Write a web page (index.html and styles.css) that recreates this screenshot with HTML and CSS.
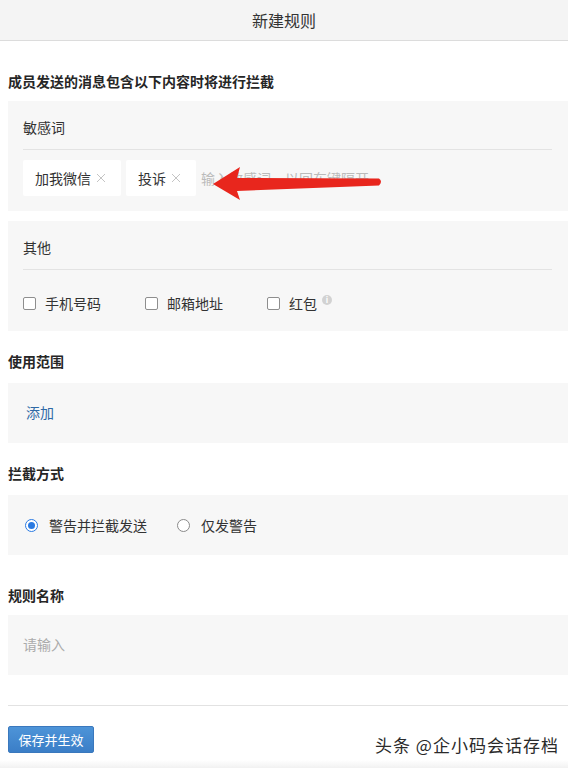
FILE: index.html
```html
<!DOCTYPE html>
<html lang="zh">
<head>
<meta charset="utf-8">
<title>新建规则</title>
<link rel="stylesheet" href="styles.css">
</head>
<body>
<div class="page">
  <header class="topbar">新建规则</header>
  <main class="content">
    <h2 class="sec-title first">成员发送的消息包含以下内容时将进行拦截</h2>
    <section class="panel">
      <div class="panel-label">敏感词</div>
      <div class="tags">
        <span class="tag">加我微信<svg class="x" viewBox="0 0 10 10" width="10" height="10"><path d="M1 1L9 9M9 1L1 9" stroke="#c4c4c4" stroke-width="1"/></svg></span>
        <span class="tag">投诉<svg class="x" viewBox="0 0 10 10" width="10" height="10"><path d="M1 1L9 9M9 1L1 9" stroke="#c4c4c4" stroke-width="1"/></svg></span>
        <span class="tag-input">输入敏感词，以回车键隔开</span>
      </div>
    </section>
    <section class="panel gap">
      <div class="panel-label">其他</div>
      <div class="checks">
        <label class="check"><span class="box"></span>手机号码</label>
        <label class="check"><span class="box"></span>邮箱地址</label>
        <label class="check"><span class="box"></span>红包<span class="info">i</span></label>
      </div>
    </section>
    <h2 class="sec-title">使用范围</h2>
    <section class="panel simple"><span class="link">添加</span></section>
    <h2 class="sec-title">拦截方式</h2>
    <section class="panel simple radios">
      <label class="radio"><span class="dot on"></span>警告并拦截发送</label>
      <label class="radio"><span class="dot"></span>仅发警告</label>
    </section>
    <h2 class="sec-title far">规则名称</h2>
    <section class="panel simple"><span class="placeholder">请输入</span></section>
    <div class="footer">
      <button class="save">保存并生效</button>
    </div>
  </main>
  <svg class="arrow" width="568" height="768" viewBox="0 0 568 768">
    <path d="M213 184 L240 167 L237 178 L379 178.5 Q383 181.5 379 185.5 L237 191 L240 200 Z" fill="#e8261d"/>
  </svg>
  <div class="watermark">头条 @企小码会话存档</div>
  <div class="bottom-shade"></div>
</div>
</body>
</html>
```
FILE: styles.css
```css
html, body {
  margin: 0;
  padding: 0;
  background: #fff;
}
body {
  font-family: "Noto Sans CJK SC", "Noto Sans", sans-serif;
  color: #333;
  font-size: 14px;
}
.page {
  position: relative;
  width: 568px;
  height: 768px;
  overflow: hidden;
}
.topbar {
  height: 40px;
  line-height: 40px;
  background: #f4f4f4;
  border-bottom: 1px solid #dcdcdc;
  text-align: center;
  font-size: 16px;
  color: #333;
}
.content {
  padding-left: 8px;
}
.sec-title {
  margin: 0;
  font-size: 14px;
  font-weight: 700;
  color: #262626;
  line-height: 20px;
  padding-top: 20px;
  padding-bottom: 12px;
}
.sec-title.first {
  padding-top: 30px;
  padding-bottom: 10px;
}
.sec-title.far {
  padding-top: 30px;
  padding-bottom: 10px;
}
.panel {
  background: #f7f7f7;
  padding: 0 16px 0 15px;
}
.panel.gap {
  margin-top: 10px;
}
.panel-label {
  line-height: 20px;
  padding: 16px 0 12px;
  border-bottom: 1px solid #e3e3e3;
}
.tags {
  display: flex;
  align-items: center;
  padding: 10px 0 15px;
}
.tag {
  display: flex;
  align-items: center;
  height: 36px;
  background: #fff;
  border-radius: 2px;
  padding: 0 15px 0 12px;
  margin-right: 5px;
  color: #333;
}
.tag .x {
  margin-left: 5px;
}
.tag-input {
  color: #bbb;
}
.checks {
  display: flex;
  align-items: center;
  padding: 23px 0 18px;
  line-height: 20px;
}
.check {
  display: flex;
  align-items: center;
  margin-right: 44px;
}
.box {
  width: 11px;
  height: 11px;
  border: 1px solid #8e8e8e;
  border-radius: 2px;
  background: #fff;
  margin-right: 9px;
}
.info {
  display: inline-block;
  width: 10px;
  height: 10px;
  border-radius: 50%;
  background: #d2d2d2;
  color: #fff;
  font-size: 8px;
  line-height: 10px;
  text-align: center;
  font-weight: 700;
  margin-left: 5px;
  margin-top: -6px;
}
.panel.simple {
  height: 60px;
  display: flex;
  align-items: center;
}
.link {
  color: #2f69a6;
  margin-left: 3px;
  margin-top: -2px;
}
.radios {
  padding-left: 17px;
}
.radio {
  display: flex;
  align-items: center;
  margin-right: 30px;
}
.dot {
  position: relative;
  width: 11px;
  height: 11px;
  border: 1px solid #8a8a8a;
  border-radius: 50%;
  background: #fff;
  margin-right: 11px;
}
.dot.on {
  border-color: #2a7ae2;
}
.dot.on::after {
  content: "";
  position: absolute;
  left: 2px;
  top: 2px;
  width: 7px;
  height: 7px;
  border-radius: 50%;
  background: #2a7ae2;
}
.placeholder {
  color: #ababab;
  margin-top: -3px;
}
.footer {
  margin-top: 30px;
  border-top: 1px solid #e2e2e2;
  padding-top: 20px;
}
.save {
  width: 86px;
  height: 27px;
  border: 1px solid #3a78bd;
  border-radius: 2px;
  background: linear-gradient(#4d94d8, #3b7ec7);
  color: #fff;
  font-family: "Noto Sans CJK SC", sans-serif;
  font-size: 13px;
  padding: 0;
}
.arrow {
  position: absolute;
  left: 0;
  top: 0;
  pointer-events: none;
}
.watermark {
  position: absolute;
  left: 375px;
  top: 734px;
  white-space: nowrap;
  font-size: 17px;
  line-height: 22px;
  letter-spacing: 1px;
  color: #2a2a2a;
  text-shadow: 1px 1px 0 #fff, -1px -1px 0 #fff, 1px -1px 0 #fff, -1px 1px 0 #fff;
}
.bottom-shade {
  position: absolute;
  left: 0;
  right: 0;
  bottom: 0;
  height: 8px;
  background: linear-gradient(rgba(240,240,240,0), rgba(238,238,238,0.8));
}
```
